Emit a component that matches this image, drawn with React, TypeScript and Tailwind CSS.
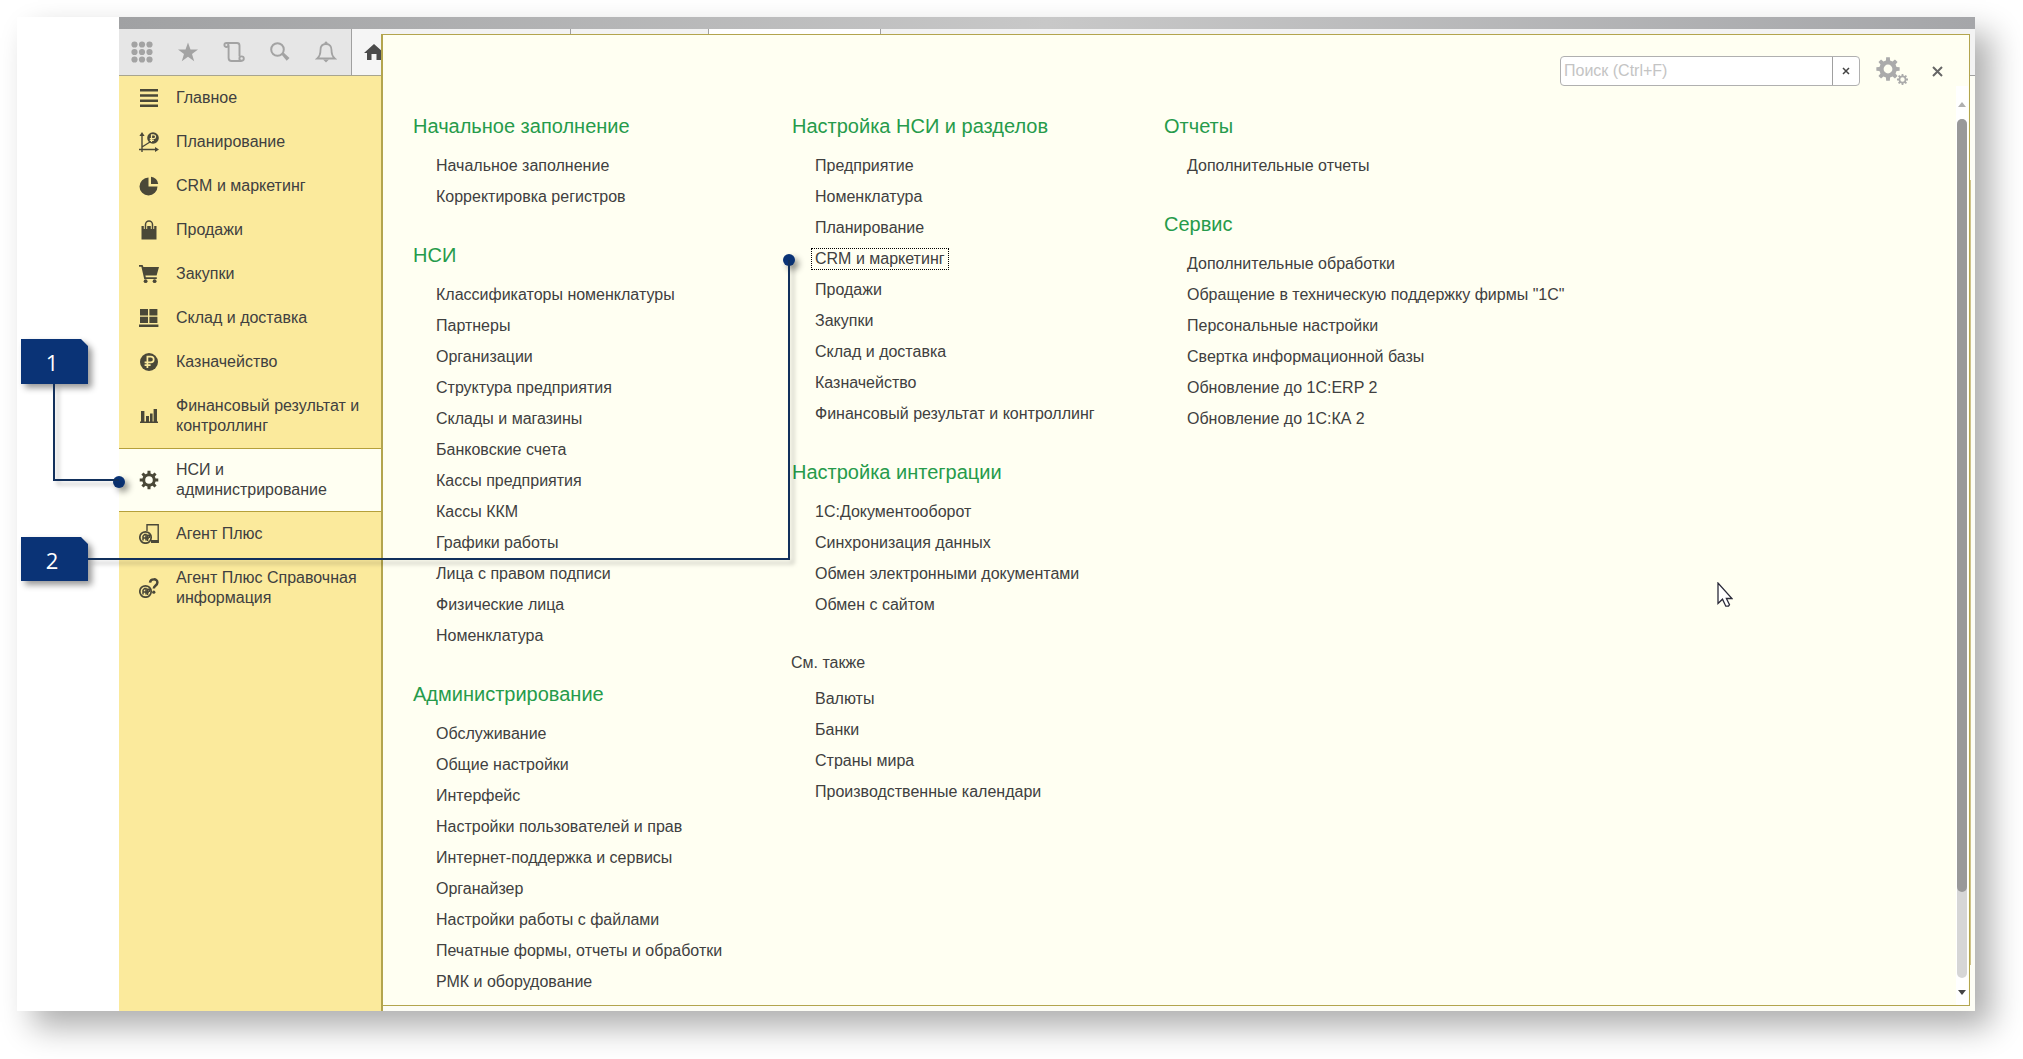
import React, { useState } from 'react';
import clsx from 'clsx';

interface MenuSection {
  title: string;
  items: string[];
  minor?: boolean;
}

interface NavEntry {
  label: string;
  icon: React.ReactNode;
}

// Builds the outline of a cog with square teeth
function gearPath(cx: number, cy: number, outer: number, inner: number, teeth: number) {
  const step = (Math.PI * 2) / teeth;
  const points: string[] = [];
  for (let i = 0; i < teeth; i++) {
    const a = i * step - Math.PI / 2;
    const corners = [
      [inner, -0.3],
      [outer, -0.2],
      [outer, 0.2],
      [inner, 0.3],
    ];
    corners.forEach(([r, k]) => {
      points.push(`${(cx + r * Math.cos(a + k * step)).toFixed(2)} ${(cy + r * Math.sin(a + k * step)).toFixed(2)}`);
    });
  }
  return `M${points.join('L')}Z`;
}

function Glyph({ children }: { children: React.ReactNode }) {
  return (
    <svg viewBox="0 0 20 20" className="w-5 h-5 shrink-0" fill="#4a4838" aria-hidden="true">
      {children}
    </svg>
  );
}

const agentBadge = (
  <>
    <circle cx="6.5" cy="13.5" r="5.7" fill="none" stroke="#4a4838" strokeWidth="1.7" />
    <path d="M4 16.500v-4.200l1.600-1.800h1.400v6M4 14h6M8.600 17v-5.800h1.800v2.800" fill="none" stroke="#4a4838" strokeWidth="1.5" />
  </>
);

const navEntries: NavEntry[] = [
  {
    label: 'Главное',
    icon: <Glyph><path d="M1 1h18v2.6H1zM1 6.2h18v2.6H1zM1 11.4h18V14H1zM1 16.4h18V19H1z" /></Glyph>,
  },
  {
    label: 'Планирование',
    icon: (
      <Glyph>
        <path d="M3 2v18M0 17.5h18M3 15l8-5" fill="none" stroke="#4a4838" strokeWidth="1.4" />
        <path d="M3 0L5.6 4H.4zM20 17.5L16 20v-5z" />
        <circle cx="14" cy="6" r="5.8" />
        <path d="M12.5 10V2.8h2.2a1.9 1.9 0 010 3.8H10.8M10.8 8.4h4" fill="none" stroke="#fbea9c" strokeWidth="1.2" />
      </Glyph>
    ),
  },
  {
    label: 'CRM и маркетинг',
    icon: (
      <Glyph>
        <path d="M9.5 1.5a9 9 0 109 9h-9z" />
        <path d="M12 0.8a8 8 0 017.2 7.2H12z" />
      </Glyph>
    ),
  },
  {
    label: 'Продажи',
    icon: (
      <Glyph>
        <path d="M2.5 6h15v13.5h-15z" />
        <path d="M6.5 9V4.5a3.5 3.5 0 017 0V9" fill="none" stroke="#fbea9c" strokeWidth="3.4" />
        <path d="M6.5 9V4.5a3.5 3.5 0 017 0V9" fill="none" stroke="#4a4838" strokeWidth="1.5" />
      </Glyph>
    ),
  },
  {
    label: 'Закупки',
    icon: (
      <Glyph>
        <path d="M0 1h3.6l.8 2H20l-2.4 8.6H6.4l.4 1.6h11V15H5.2L2.4 2.8H0z" />
        <circle cx="6.6" cy="17.2" r="1.9" />
        <circle cx="15.6" cy="17.2" r="1.9" />
      </Glyph>
    ),
  },
  {
    label: 'Склад и доставка',
    icon: <Glyph><path d="M1 1h8v6.4H1zM10.4 1h8v6.4h-8zM1 8.8h8v6.2H1zM10.4 8.8h8v6.2h-8zM0 16.6h19.4V19H0z" /></Glyph>,
  },
  {
    label: 'Казначейство',
    icon: (
      <Glyph>
        <circle cx="10" cy="10" r="9" />
        <path d="M8.4 16V4.6h3.4a2.9 2.9 0 010 5.8H5.6M5.6 13.2h6" fill="none" stroke="#fbea9c" strokeWidth="1.7" />
      </Glyph>
    ),
  },
  {
    label: 'Финансовый результат и контроллинг',
    icon: <Glyph><path d="M1 15.4h18V17H1zM2 5h3.400v11H2zM7 10h3v6H7zM11 7.600h2.600v8H11zM14.600 3H18v13h-3.400z" /></Glyph>,
  },
  {
    label: 'НСИ и администрирование',
    icon: (
      <Glyph>
        <path fillRule="evenodd" d={gearPath(10, 10, 9.4, 6.8, 8) + 'M10 6.2a3.8 3.8 0 100 7.6a3.8 3.8 0 000-7.6Z'} />
      </Glyph>
    ),
  },
  {
    label: 'Агент Плюс',
    icon: (
      <Glyph>
        <path d="M8 7V.8h11.2v17.6H12" fill="none" stroke="#4a4838" strokeWidth="1.4" />
        <path d="M12 16h7.6v3H12z" />
        {agentBadge}
      </Glyph>
    ),
  },
  {
    label: 'Агент Плюс Справочная информация',
    icon: (
      <Glyph>
        {agentBadge}
        <path d="M11 4.6C11.4.4 18.6.2 18.4 4.6c0 3-3.6 2.8-3.6 6" fill="none" stroke="#4a4838" strokeWidth="2.5" />
        <circle cx="14.8" cy="14.2" r="1.6" />
      </Glyph>
    ),
  },
];

const columns: MenuSection[][] = [
  [
    { title: 'Начальное заполнение', items: ['Начальное заполнение', 'Корректировка регистров'] },
    {
      title: 'НСИ',
      items: [
        'Классификаторы номенклатуры',
        'Партнеры',
        'Организации',
        'Структура предприятия',
        'Склады и магазины',
        'Банковские счета',
        'Кассы предприятия',
        'Кассы ККМ',
        'Графики работы',
        'Лица с правом подписи',
        'Физические лица',
        'Номенклатура',
      ],
    },
    {
      title: 'Администрирование',
      items: [
        'Обслуживание',
        'Общие настройки',
        'Интерфейс',
        'Настройки пользователей и прав',
        'Интернет-поддержка и сервисы',
        'Органайзер',
        'Настройки работы с файлами',
        'Печатные формы, отчеты и обработки',
        'РМК и оборудование',
      ],
    },
  ],
  [
    {
      title: 'Настройка НСИ и разделов',
      items: [
        'Предприятие',
        'Номенклатура',
        'Планирование',
        'CRM и маркетинг',
        'Продажи',
        'Закупки',
        'Склад и доставка',
        'Казначейство',
        'Финансовый результат и контроллинг',
      ],
    },
    {
      title: 'Настройка интеграции',
      items: ['1С:Документооборот', 'Синхронизация данных', 'Обмен электронными документами', 'Обмен с сайтом'],
    },
    { title: 'См. также', items: ['Валюты', 'Банки', 'Страны мира', 'Производственные календари'], minor: true },
  ],
  [
    { title: 'Отчеты', items: ['Дополнительные отчеты'] },
    {
      title: 'Сервис',
      items: [
        'Дополнительные обработки',
        'Обращение в техническую поддержку фирмы "1С"',
        'Персональные настройки',
        'Свертка информационной базы',
        'Обновление до 1С:ERP 2',
        'Обновление до 1С:КА 2',
      ],
    },
  ],
];

function ToolButton({ label, children }: { label: string; children: React.ReactNode }) {
  return (
    <button aria-label={label} className="w-[46px] h-full shrink-0 flex items-center justify-center">
      <svg viewBox="0 0 22 22" className="w-[22px] h-[22px]" fill="#a3a3a3" aria-hidden="true">
        {children}
      </svg>
    </button>
  );
}

function Toolbar() {
  return (
    <div className="h-[47px] flex bg-[#e6e6e6] border-b border-[#a8a58f] overflow-hidden">
      <ToolButton label="Меню">
        {[3.5, 11, 18.5].map((y) => [3.5, 11, 18.5].map((x) => <circle key={`${x}-${y}`} cx={x} cy={y} r="3.1" />))}
      </ToolButton>
      <ToolButton label="Избранное">
        <path d="M11 1.5l2.5 7H21l-6 4.4 2.2 7.3-6.2-4.4-6.2 4.4L7 12.9 1 8.5h7.5z" />
      </ToolButton>
      <ToolButton label="История">
        <g fill="none" stroke="#a3a3a3" strokeWidth="1.9">
          <path d="M5.6 4.5V17a3 3 0 003 3h10M3.5 2H14a2.500 2.500 0 012.500 2.500V15.500" />
          <circle cx="3.4" cy="4" r="2" />
          <circle cx="18.6" cy="17.6" r="2.2" />
        </g>
      </ToolButton>
      <ToolButton label="Поиск">
        <circle cx="8.5" cy="8.5" r="6.3" fill="none" stroke="#a3a3a3" strokeWidth="2" />
        <path d="M12.5 13.5l2-2 6 5.500-2.800 2.800z" />
      </ToolButton>
      <ToolButton label="Оповещения">
        <path
          d="M11 3C7 3 5.5 5.800 5.500 9c0 5-1 6.500-3.200 8.500h17.400C17.500 15.500 16.500 14 16.500 9c0-3.200-1.500-6-5.500-6z"
          fill="none"
          stroke="#a3a3a3"
          strokeWidth="1.8"
        />
        <path d="M9.5 1.5L11 .2l1.500 1.300V4h-3zM8 18.500h6l-3 3z" />
      </ToolButton>
      <button
        aria-label="Начальная страница"
        className="flex-1 min-w-0 ml-0.5 pl-3 flex items-center border-l border-[#a0a0a0] bg-[#f5f5f5]"
      >
        <svg viewBox="0 0 20 16" className="w-5 h-4 shrink-0" fill="#4a4a4a" aria-hidden="true">
          <path d="M10 0l10 9h-3v7h-4.500v-6h-5v6H3V9H0z" />
        </svg>
      </button>
    </div>
  );
}

function Sidebar({ active, onSelect }: { active: string; onSelect: (label: string) => void }) {
  return (
    <nav className="flex-1 bg-[#fbea9c]">
      {navEntries.map(({ label, icon }) => (
        <button
          key={label}
          onClick={() => onSelect(label)}
          className={clsx(
            'w-full flex items-center gap-[17px] pl-5 pr-3 text-left leading-5',
            label === active ? 'bg-[#fffff2] border-y border-[#b5a03a] py-[11px]' : 'py-3'
          )}
        >
          {icon}
          <span>{label}</span>
        </button>
      ))}
    </nav>
  );
}

function Section({ title, items, minor, focused }: MenuSection & { focused: string }) {
  return (
    <section>
      <h2 className={clsx('leading-6', minor ? 'mb-2 -ml-px' : 'mb-3 text-xl text-[#269b4b]')}>{title}</h2>
      <ul className="pl-5">
        {items.map((item) => (
          <li key={item} className="h-[31px] flex items-center">
            <a
              href="#"
              className={clsx('px-[3px] leading-5 whitespace-nowrap', item === focused && 'outline-1 outline-dotted outline-black')}
            >
              {item}
            </a>
          </li>
        ))}
      </ul>
    </section>
  );
}

function SearchBar() {
  return (
    <div className="flex justify-end items-center pr-[26px]">
      <div className="flex w-[300px] h-[30px] border border-[#b0b0b0] rounded bg-white overflow-hidden">
        <input
          type="text"
          aria-label="Поиск"
          placeholder="Поиск (Ctrl+F)"
          className="flex-1 min-w-0 px-[3px] outline-none placeholder:text-[#c4c4c4]"
        />
        <button aria-label="Очистить" className="w-[27px] flex items-center justify-center border-l border-[#a0a0a0]">
          <svg viewBox="0 0 8 8" className="w-2 h-2" stroke="#444" strokeWidth="1.5" aria-hidden="true">
            <path d="M1 1l6 6M7 1L1 7" />
          </svg>
        </button>
      </div>
      <button aria-label="Настройки" className="ml-4">
        <svg viewBox="0 0 32 28" className="w-8 h-7" fill="#ababab" fillRule="evenodd" aria-hidden="true">
          <path d={gearPath(12, 12, 11.8, 8.8, 8) + 'M12 7.6a4.4 4.4 0 100 8.8a4.4 4.4 0 000-8.8Z'} />
          <path d={gearPath(26.5, 22.5, 5.6, 4, 8) + 'M26.5 20.3a2.2 2.2 0 100 4.4a2.2 2.2 0 000-4.4Z'} />
        </svg>
      </button>
      <button aria-label="Закрыть" className="ml-6">
        <svg viewBox="0 0 11 11" className="w-[11px] h-[11px]" stroke="#666" strokeWidth="2" aria-hidden="true">
          <path d="M1 1l9 9M10 1l-9 9" />
        </svg>
      </button>
    </div>
  );
}

function ScrollRail() {
  return (
    <div className="w-3 flex flex-col items-center bg-white mr-px pb-2.5 pt-4">
      <svg viewBox="0 0 8 5" className="w-2 h-[5px]" fill="#b0b0b0" aria-hidden="true">
        <path d="M4 0l4 5H0z" />
      </svg>
      <div className="flex-1 w-2.5 my-3 rounded-full bg-[#d6d6d6]">
        <div className="w-2.5 h-[90%] rounded-full bg-[#999]" />
      </div>
      <svg viewBox="0 0 8 5" className="w-2 h-[5px]" fill="#444" aria-hidden="true">
        <path d="M0 0h8L4 5z" />
      </svg>
    </div>
  );
}

function Callouts() {
  return (
    <svg viewBox="0 0 800 600" className="absolute left-0 top-0 w-[800px] h-[600px] pointer-events-none" aria-hidden="true">
      <g className="[filter:drop-shadow(4px_4px_3px_rgba(0,0,0,0.4))]">
        <path d="M4 322h60l7 7v38H4zM4 520h60l7 7v37H4z" fill="#0a3376" />
        <circle cx="102" cy="465" r="6" fill="#0a3376" />
        <circle cx="772" cy="243" r="6" fill="#0a3376" />
      </g>
      <path
        d="M37 367v96h65M71 542h701V243"
        fill="none"
        stroke="#12305c"
        strokeWidth="2"
        className="[filter:drop-shadow(4px_4px_2px_rgba(0,0,0,0.25))]"
      />
      <g fill="#fff" fontFamily="'Open Sans', sans-serif" fontSize="22" textAnchor="middle">
        <text x="35" y="354">1</text>
        <text x="35" y="552">2</text>
      </g>
    </svg>
  );
}

export default function App() {
  const [active, setActive] = useState('НСИ и администрирование');

  return (
    <div className="min-h-screen flex bg-white pt-[17px] pl-[17px] pr-12 pb-12 text-base text-[#404040] font-['Liberation_Sans',sans-serif]">
      <div className="relative flex-1 flex bg-white pl-[102px] shadow-[16px_16px_30px_rgba(0,0,0,0.32)]">
        <div className="flex-1 flex flex-col">
          <div className="h-3 bg-linear-to-r from-[#a0a1a3] via-[#c8c8c8] to-[#a5a6a9]" />
          <div className="flex-1 flex">
            <div className="w-[262px] shrink-0 flex flex-col">
              <Toolbar />
              <Sidebar active={active} onSelect={setActive} />
            </div>

            <div className="flex-1 flex flex-col bg-[#fdfdf5]">
              {/* Tops of the open tabs peeking out above the panel */}
              <div className="h-[5px] flex bg-[#f3f3f3]">
                <div className="w-[190px] border-r border-[#a0a0a0]" />
                <div className="w-[138px] border-r border-[#a0a0a0]" />
                <div className="w-[172px] border-r border-[#a0a0a0] bg-white" />
              </div>
              <div className="flex-1 flex">
                <main className="flex-1 flex flex-col bg-[#fffff2] border border-l-2 border-[#b3a54e] pt-[21px]">
                  <SearchBar />
                  <div className="flex-1 flex">
                    <div className="flex-1 grid grid-cols-[379px_372px_1fr] pl-[30px] pt-7">
                      {columns.map((sections, i) => (
                        <div key={i} className="flex flex-col gap-[31px]">
                          {sections.map((section) => (
                            <Section key={section.title} {...section} focused={i === 1 ? 'CRM и маркетинг' : ''} />
                          ))}
                        </div>
                      ))}
                    </div>
                    <ScrollRail />
                  </div>
                </main>
                {/* Edge of the window behind the panel */}
                <div className="w-[5px] flex flex-col">
                  <div className="h-[42px] bg-[#f3f3f3] border-b border-[#a0a0a0]" />
                  <div className="flex-1 w-px mt-[104px] mb-[41px] bg-[#cfc38a]" />
                </div>
              </div>
              <div className="h-[5px] border-l-2 border-[#b3a54e]" />
            </div>
          </div>
        </div>
        <Callouts />
        <svg viewBox="0 0 16 26" className="absolute left-[1700px] top-[565px] w-4 h-[26px]" aria-hidden="true">
          <path d="M1 1v20.500l4.500-4.300 3.300 7h2.700l1-1.500-3.100-6.200H15z" fill="#fff" stroke="#2b2b3a" strokeWidth="1.3" />
        </svg>
      </div>
    </div>
  );
}
